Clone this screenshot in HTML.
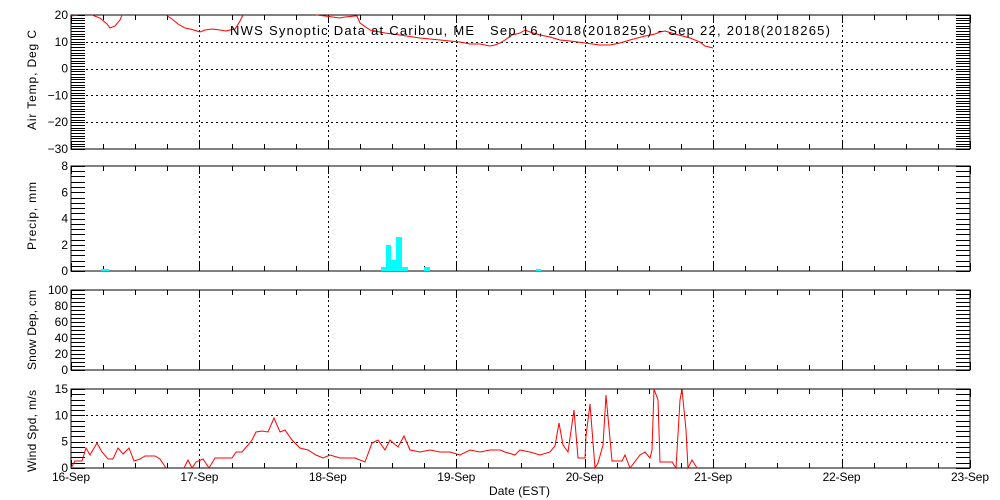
<!DOCTYPE html>
<html><head><meta charset="utf-8"><style>
html,body{margin:0;padding:0;background:#fff;}
svg{display:block;font-family:"Liberation Sans",sans-serif;}
</style></head><body>
<svg id="s" width="1000" height="500" viewBox="0 0 1000 500" xmlns="http://www.w3.org/2000/svg">
<rect width="1000" height="500" fill="#fff"/>
<g id="g"></g>
<g fill="#00ffff">
<rect x="101" y="269" width="8" height="2"/>
<rect x="381" y="267" width="5" height="4"/>
<rect x="386" y="245" width="5" height="26"/>
<rect x="391" y="260" width="5" height="11"/>
<rect x="396" y="237" width="6" height="34"/>
<rect x="402" y="267" width="6" height="4"/>
<rect x="424" y="267" width="6" height="4"/>
<rect x="536" y="269" width="5" height="2"/>
</g>
<g fill="none" stroke="#ff0000" stroke-width="1">
<polyline points="71,16 78,15"/>
<polyline points="92,15 100,18 107,24 110,28 115,26 120,20 122,15"/>
<polyline points="166,15 172,19 178,24 185,28 190,29 197,31 200,32 205,30 212,29 220,30 226,31 230,30 235,29 240,21 243,15"/>
<polyline points="316,15 325,16 340,18 345,17 355,16 357,16 360,23 370,30 385,33 400,35 420,38 440,40 460,42 470,44 480,44 490,46 495,45 500,43 505,40 512,35 520,33 525,30 530,32 540,35 550,37 560,40 570,41 585,43 600,45 610,45 620,43 630,40 645,36 655,34 660,32 665,31 675,34 690,38 700,42 705,46 713,48"/>
<polyline points="71,468 75,461 82,461 86,448 90,455 97,443 102,452 108,459 113,459 118,448 123,454 129,448 134,461 140,459 145,456 155,456 160,459 166,468"/>
<polyline points="184,468 188,460 192,468 196,462 203,459 209,468 215,458 232,458 236,452 242,452 248,445 252,440 256,432 262,431 268,432 274,418 280,432 285,430 292,440 300,448 308,450 316,455 323,458 330,455 340,458 355,458 365,462 372,443 378,440 385,450 390,440 398,447 404,436 410,450 420,452 430,450 440,452 450,452 460,455 470,450 480,452 490,450 500,450 505,452 515,455 520,450 530,452 540,455 550,452 555,446 559,423 563,445 568,452 574,410 578,458 585,458 586,436 590,404 595,468 598,463 603,445 606,395 612,461 622,461 625,455 630,468 640,455 645,452 650,458 652,450 654,389 658,400 660,462 672,462 676,468 680,400 682,389 686,430 688,468 692,460 697,468"/>
</g>
<text x="230" y="35" font-size="13" fill="#000" xml:space="preserve" textLength="600" lengthAdjust="spacing">NWS Synoptic Data at Caribou, ME   Sep 16, 2018(2018259) - Sep 22, 2018(2018265)</text>
<text x="489" y="495" font-size="12" textLength="61">Date (EST)</text>
<text transform="translate(36,130) rotate(-90)" font-size="12" textLength="100">Air Temp, Deg C</text>
<text transform="translate(36,250) rotate(-90)" font-size="12" textLength="68">Precip, mm</text>
<text transform="translate(36,370) rotate(-90)" font-size="12" textLength="80">Snow Dep, cm</text>
<text transform="translate(36,472) rotate(-90)" font-size="12" textLength="82">Wind Spd, m/s</text>
</svg>
<script>
var g=document.getElementById('g'),h='';
var X0=71,X1=970,days=["16-Sep","17-Sep","18-Sep","19-Sep","20-Sep","21-Sep","22-Sep","23-Sep"];
function dx(i){return X0+(X1-X0)*i/7;}
var panels=[
 {t:15,b:149,v0:-30,v1:20,maj:10,min:1,labs:[20,10,0,-10,-20,-30],tl:14,grid:true},
 {t:166,b:271,v0:0,v1:8,maj:2,min:0.4,labs:[8,6,4,2,0],tl:14,grid:false},
 {t:290,b:370,v0:0,v1:100,maj:10,min:5,labs:[100,80,60,40,20,0],tl:14,grid:false},
 {t:389,b:468,v0:0,v1:15,maj:5,min:1,labs:[15,10,5,0],tl:14,grid:true}
];
panels.forEach(function(p){
 function y(v){return p.b-(v-p.v0)*(p.b-p.t)/(p.v1-p.v0);}
 h+='<rect x="'+X0+'" y="'+p.t+'" width="'+(X1-X0)+'" height="'+(p.b-p.t)+'" fill="none" stroke="#000"/>';
 for(var i=1;i<7;i++){var x=Math.round(dx(i))+.5;h+='<line x1="'+x+'" y1="'+p.t+'" x2="'+x+'" y2="'+p.b+'" stroke="#000" stroke-dasharray="2,3"/>';}
 if(p.grid)for(var v=p.v0+p.maj;v<p.v1-1e-6;v+=p.maj){var yy=Math.round(y(v))+.5;h+='<line x1="'+X0+'" y1="'+yy+'" x2="'+X1+'" y2="'+yy+'" stroke="#000" stroke-dasharray="2,3"/>';}
 for(var v=p.v0;v<=p.v1+1e-6;v+=p.min){var yy=Math.round(y(v))+.5;h+='<line x1="'+X0+'" y1="'+yy+'" x2="'+(X0+p.tl)+'" y2="'+yy+'" stroke="#000"/><line x1="'+(X1-p.tl)+'" y1="'+yy+'" x2="'+X1+'" y2="'+yy+'" stroke="#000"/>';}
 for(var k=0;k<=28;k++){var x=Math.round(X0+(X1-X0)*k/28)+.5;var L=(k%4==0)?8:5;h+='<line x1="'+x+'" y1="'+p.t+'" x2="'+x+'" y2="'+(p.t+L)+'" stroke="#000"/><line x1="'+x+'" y1="'+(p.b-L)+'" x2="'+x+'" y2="'+p.b+'" stroke="#000"/>';}
 p.labs.forEach(function(v){h+='<text x="'+(X0-3)+'" y="'+(y(v)+4)+'" font-size="12" text-anchor="end">'+(v<0?'\u2212'+(-v):v)+'</text>';});
});
days.forEach(function(d,i){h+='<text x="'+(dx(i)-19)+'" y="481" font-size="12" textLength="38">'+d+'</text>';});
g.innerHTML=h;
</script>
</body></html>
